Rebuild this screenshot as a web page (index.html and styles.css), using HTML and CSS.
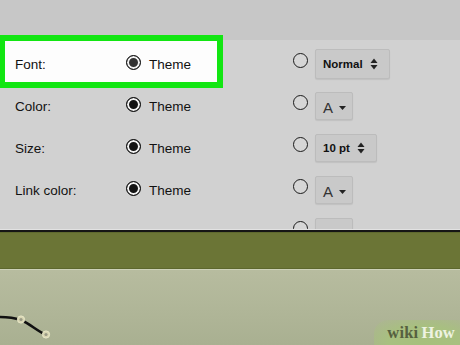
FILE: index.html
```html
<!DOCTYPE html>
<html>
<head>
<meta charset="utf-8">
<link rel="stylesheet" href="styles.css">
</head>
<body>
<div class="shot">
  <div class="settings">
    <div class="topband"></div>
    <div class="highlight"></div>
    <div class="rows">
      <div class="row">
        <span class="label">Font:</span>
        <span class="opt theme"><span class="radio on"></span>Theme</span>
        <span class="opt custom"><span class="radio"></span>
          <span class="sel sel-wide"><b>Normal</b>
            <svg class="spin" width="8" height="12" viewBox="0 0 8 12"><polygon points="0.5,5 4,0.5 7.5,5"/><polygon points="0.5,7 4,11.5 7.5,7"/></svg>
          </span>
        </span>
      </div>
      <div class="row">
        <span class="label">Color:</span>
        <span class="opt theme"><span class="radio on"></span>Theme</span>
        <span class="opt custom"><span class="radio"></span>
          <span class="sel sel-color"><span class="glyph">A</span>
            <svg class="caret" width="7" height="4" viewBox="0 0 7 4"><polygon points="0,0 7,0 3.5,4"/></svg>
          </span>
        </span>
      </div>
      <div class="row">
        <span class="label">Size:</span>
        <span class="opt theme"><span class="radio on"></span>Theme</span>
        <span class="opt custom"><span class="radio"></span>
          <span class="sel sel-size"><b>10 pt</b>
            <svg class="spin" width="8" height="12" viewBox="0 0 8 12"><polygon points="0.5,5 4,0.5 7.5,5"/><polygon points="0.5,7 4,11.5 7.5,7"/></svg>
          </span>
        </span>
      </div>
      <div class="row">
        <span class="label">Link color:</span>
        <span class="opt theme"><span class="radio on"></span>Theme</span>
        <span class="opt custom"><span class="radio"></span>
          <span class="sel sel-color"><span class="glyph">A</span>
            <svg class="caret" width="7" height="4" viewBox="0 0 7 4"><polygon points="0,0 7,0 3.5,4"/></svg>
          </span>
        </span>
      </div>
      <div class="row">
        <span class="label"></span>
        <span class="opt theme"></span>
        <span class="opt custom"><span class="radio"></span>
          <span class="sel sel-color"></span>
        </span>
      </div>
    </div>
  </div>
  <div class="divider"></div>
  <div class="olive"></div>
  <div class="ground">
    <svg class="cable" width="80" height="40" viewBox="0 0 80 40">
      <path d="M0 17 C8 17 15 18 21 20 C30 24 36 30 46 35" fill="none" stroke="#111" stroke-width="2.6"/>
      <circle cx="21" cy="19.5" r="3.6" fill="#d8d6b2" stroke="#e9e7c8" stroke-width="1"/>
      <circle cx="21" cy="19.5" r="1.6" fill="#9a9a86"/>
      <circle cx="46" cy="34.5" r="3.6" fill="#d8d6b2" stroke="#e9e7c8" stroke-width="1"/>
      <circle cx="46" cy="34.5" r="1.6" fill="#9a9a86"/>
    </svg>
    <div class="logo"><span class="wiki">wiki</span><span class="how">How</span></div>
  </div>
</div>
</body>
</html>
```
FILE: styles.css
```css
html, body {
  margin: 0;
  padding: 0;
}
body {
  width: 460px;
  height: 345px;
  overflow: hidden;
  font-family: "Liberation Sans", Arial, sans-serif;
  color: #111;
}
.shot {
  display: flex;
  flex-direction: column;
  width: 460px;
  height: 345px;
}
.settings {
  position: relative;
  height: 229px;
  overflow: hidden;
  background: #d1d1d1;
  flex: none;
}
.topband {
  height: 40px;
  background: #c7c7c7;
}
.highlight {
  position: absolute;
  left: -1px;
  top: 35px;
  width: 224px;
  height: 53px;
  box-sizing: border-box;
  border: 6px solid #12e612;
  background: #fdfdfd;
  z-index: 1;
}
.rows {
  position: relative;
  z-index: 2;
  margin-top: 3px;
  padding-left: 15px;
}
.row {
  display: flex;
  align-items: center;
  height: 42px;
  font-size: 13.5px;
}
.label {
  width: 111px;
  flex: none;
}
.opt {
  display: flex;
  align-items: center;
}
.theme {
  width: 167px;
  flex: none;
  gap: 8px;
}
.custom {
  gap: 7px;
}
.radio {
  width: 15px;
  height: 15px;
  box-sizing: border-box;
  border-radius: 50%;
  border: 1.3px solid #1a1a1a;
  background: #d6d6d6;
  flex: none;
}
.radio.on {
  border: 1.6px solid #111;
  background: #141414;
  box-shadow: inset 0 0 0 2px #f2f2f2;
  margin-top: -3px;
}
.row:first-child .radio.on {
  background: #333;
}
.custom .radio {
  margin-bottom: 7px;
}
.sel {
  display: flex;
  align-items: center;
  justify-content: space-between;
  box-sizing: border-box;
  height: 28px;
  background: #c9c9c9;
  border: 1px solid #bcbcbc;
  border-radius: 2px;
  box-shadow: 0 1px 1px rgba(0, 0, 0, 0.08);
  padding: 0 11px 0 7px;
  font-size: 11.5px;
  color: #111;
}
.sel-wide {
  width: 75px;
  height: 30px;
}
.sel-size {
  width: 62px;
}
.sel-color {
  width: 38px;
  padding: 0 6px 0 7px;
}
.glyph {
  font-size: 15px;
  color: #333;
  margin-top: 2px;
}
.spin polygon,
.caret polygon {
  fill: #222;
}
.caret {
  margin-top: 3px;
}
.divider {
  height: 3px;
  flex: none;
  box-sizing: border-box;
  border-top: 1px solid #e2e2e2;
  background: #151515;
}
.olive {
  height: 37px;
  flex: none;
  box-sizing: border-box;
  background: #6b7536;
  border-top: 1px solid #5f692e;
  border-bottom: 1px solid #5d672d;
}
.ground {
  position: relative;
  flex: 1;
  border-top: 1px solid #cdd1b8;
  background: linear-gradient(180deg, #b7bc9f 0%, #afb597 60%, #a9b091 100%);
  overflow: hidden;
}
.cable {
  position: absolute;
  left: 0;
  top: 30px;
}
.logo {
  position: absolute;
  right: -4px;
  bottom: -6px;
  padding: 3px 9px 8px 13px;
  border-radius: 14px 0 0 0;
  background: radial-gradient(ellipse at 55% 70%, #a6c07c 0%, #a8c080 50%, rgba(168, 190, 128, 0) 100%);
  font-family: "Liberation Serif", "Times New Roman", serif;
  font-weight: bold;
  font-size: 16.5px;
  letter-spacing: 0.2px;
}
.wiki {
  color: #56603f;
  margin-right: 3px;
}
.how {
  color: #eef3e2;
}
```
